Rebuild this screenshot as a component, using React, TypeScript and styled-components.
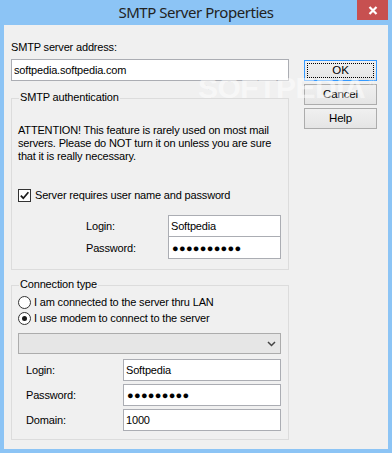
import React from 'react';
import styled, { createGlobalStyle } from 'styled-components';

const Global = createGlobalStyle`
  html, body { margin: 0; padding: 0; }
  body {
    width: 392px; height: 453px; overflow: hidden;
    background: #8cc4f5;
    font-family: "Liberation Sans", Arial, sans-serif;
    font-size: 11px; letter-spacing: -0.17px; color: #000;
  }
`;

const Window = styled.div`
  width: 392px; height: 453px; box-sizing: border-box;
  background: #8cc4f5;
  display: flex; flex-direction: column;
  padding: 0 4px 4px 4px;
`;

const TitleBar = styled.div`
  height: 25px; flex: none;
  display: grid; grid-template-columns: 1fr auto 1fr; align-items: start;
`;

const Title = styled.div`
  grid-column: 2;
  padding-top: 2px;
  font-family: "Noto Sans", "Open Sans", sans-serif;
  font-size: 15px; line-height: 20px; letter-spacing: -0.45px; color: #222;
  white-space: nowrap;
`;

const CloseButton = styled.div`
  grid-column: 3; justify-self: end;
  width: 31px; height: 20px;
  background: #c75050;
  display: flex; align-items: center; justify-content: center;
`;

const Client = styled.div`
  flex: 1; position: relative;
  background: #f0f0f0;
  box-sizing: border-box;
  padding: 16px 11px 0 7px;
  display: grid; grid-template-columns: 278px 73px; column-gap: 15px;
  align-items: start;
`;

const LeftCol = styled.div`
  display: flex; flex-direction: column;
`;

const Label = styled.div`
  line-height: 13px; white-space: nowrap;
`;

const TextBox = styled.input<{ $w?: number; $joined?: boolean }>`
  box-sizing: border-box;
  width: ${p => (p.$w ? `${p.$w}px` : '100%')};
  height: 22px; margin: 0;
  border: 1px solid #abadb3;
  ${p => (p.$joined ? 'border-top: none;' : '')}
  background: #fff; padding: 0 2px;
  font-family: "Liberation Sans", Arial, sans-serif; font-size: 11px;
  letter-spacing: -0.17px; color: #000;
  outline: none;
`;

const PasswordText = styled.span`
  font-size: 11px; letter-spacing: 0.3px;
`;

const PasswordBox = styled.div<{ $joined?: boolean }>`
  box-sizing: border-box; width: 100%; height: 22px;
  border: 1px solid #abadb3;
  ${p => (p.$joined ? 'border-top: none;' : '')}
  background: #fff; padding: 0 3px;
  display: flex; align-items: center;
`;

const AddressBox = styled(TextBox)`
  margin-top: 5px;
`;

const GroupBox = styled.div<{ $mt: number; $pt: number; $pb: number }>`
  position: relative;
  margin-top: ${p => p.$mt}px;
  border: 1px solid #dcdcdc;
  padding: ${p => p.$pt}px 7px ${p => p.$pb}px 6px;
  display: flex; flex-direction: column;
`;

const GroupTitle = styled.div`
  position: absolute; top: -8px; left: 7px;
  padding: 0 1px; background: #f0f0f0;
  line-height: 13px; white-space: nowrap;
`;

const Notice = styled.p`
  margin: 0; line-height: 13px;
`;

const CheckRow = styled.div`
  margin-top: 26px; height: 13px;
  display: flex; align-items: center; gap: 4px;
  line-height: 13px; white-space: nowrap;
`;

const CheckBox = styled.span`
  box-sizing: border-box; width: 13px; height: 13px; flex: none;
  border: 1px solid #333; background: #fff;
  display: flex; align-items: center; justify-content: center;
`;

const FieldGrid = styled.div<{ $ml: number; $mt: number; $cols: string; $gap: number }>`
  margin-left: ${p => p.$ml}px; margin-top: ${p => p.$mt}px;
  display: grid; grid-template-columns: ${p => p.$cols};
  grid-auto-rows: 22px; row-gap: ${p => p.$gap}px;
  align-items: center;
`;

const RadioRow = styled.div`
  height: 16px; display: flex; align-items: center; gap: 3px;
  line-height: 13px; white-space: nowrap;
`;

const Radio = styled.span<{ $on?: boolean }>`
  box-sizing: border-box; width: 13px; height: 13px; flex: none;
  border: 1px solid #333; border-radius: 50%; background: #fff;
  display: flex; align-items: center; justify-content: center;
  &::after {
    content: '';
    width: 5px; height: 5px; border-radius: 50%;
    background: ${p => (p.$on ? '#1a1a1a' : 'transparent')};
  }
`;

const Combo = styled.div`
  box-sizing: border-box; margin-top: 7px; height: 21px;
  border: 1px solid #acacac; background: #e6e6e6;
  display: flex; align-items: center; justify-content: flex-end;
  padding-right: 4px;
`;

const ButtonCol = styled.div`
  margin-top: 19px;
  display: flex; flex-direction: column; gap: 3px;
  position: relative; z-index: 0;
`;

const Button = styled.div<{ $default?: boolean }>`
  box-sizing: border-box; height: 21px;
  border: 1px solid ${p => (p.$default ? '#3399ff' : '#acacac')};
  background: linear-gradient(#f0f0f0, #e5e5e5);
  display: flex; align-items: center; justify-content: center;
  font-size: 11.5px; line-height: 13px; padding: ${p => (p.$default ? '2px' : '0')};
`;

const FocusRing = styled.div`
  box-sizing: border-box; width: 100%; height: 100%;
  border: 1px dotted #000;
  display: flex; align-items: center; justify-content: center;
`;

const Watermark = styled.div`
  position: absolute; left: 194px; top: 43px; z-index: 2;
  pointer-events: none;
  font-family: "Liberation Sans", Arial, sans-serif;
  font-weight: bold; font-size: 30px; line-height: 30px; letter-spacing: -0.5px;
  color: rgba(255, 255, 255, 0.5);
  -webkit-text-stroke: 0.6px rgba(0, 0, 0, 0.04);
  white-space: nowrap;
  sup { font-size: 10px; vertical-align: 12px; margin-left: 3px; }
`;

export default function App() {
  return (
    <>
      <Global />
      <Window>
        <TitleBar>
          <Title>SMTP Server Properties</Title>
          <CloseButton>
            <svg width="10" height="9" viewBox="0 0 10 9">
              <path d="M1.5 1 L8.5 8 M8.5 1 L1.5 8" stroke="#fff" strokeWidth="2.2" />
            </svg>
          </CloseButton>
        </TitleBar>
        <Client>
          <LeftCol>
            <Label>SMTP server address:</Label>
            <AddressBox readOnly value="softpedia.softpedia.com" />
            <GroupBox $mt={17} $pt={25} $pb={10}>
              <GroupTitle>SMTP authentication</GroupTitle>
              <Notice>
                ATTENTION! This feature is rarely used on most mail<br />
                servers. Please do NOT turn it on unless you are sure<br />
                that it is really necessary.
              </Notice>
              <CheckRow>
                <CheckBox>
                  <svg width="11" height="11" viewBox="0 0 11 11">
                    <path d="M1.8 5.6 L4.3 8.2 L9.4 2.3" stroke="#1a1a1a" strokeWidth="1.7" fill="none" />
                  </svg>
                </CheckBox>
                Server requires user name and password
              </CheckRow>
              <FieldGrid $ml={68} $mt={13} $cols="82px 113px" $gap={0}>
                <Label>Login:</Label>
                <TextBox readOnly value="Softpedia" />
                <Label>Password:</Label>
                <PasswordBox $joined><PasswordText>●●●●●●●●●●</PasswordText></PasswordBox>
              </FieldGrid>
            </GroupBox>
            <GroupBox $mt={15} $pt={8} $pb={8}>
              <GroupTitle>Connection type</GroupTitle>
              <RadioRow><Radio />I am connected to the server thru LAN</RadioRow>
              <RadioRow><Radio $on />I use modem to connect to the server</RadioRow>
              <Combo>
                <svg width="9" height="6" viewBox="0 0 9 6">
                  <path d="M1 1 L4.5 4.5 L8 1" stroke="#444" strokeWidth="1.5" fill="none" />
                </svg>
              </Combo>
              <FieldGrid $ml={8} $mt={5} $cols="97px 158px" $gap={3}>
                <Label>Login:</Label>
                <TextBox readOnly value="Softpedia" />
                <Label>Password:</Label>
                <PasswordBox><PasswordText>●●●●●●●●●</PasswordText></PasswordBox>
                <Label>Domain:</Label>
                <TextBox readOnly value="1000" />
              </FieldGrid>
            </GroupBox>
          </LeftCol>
          <ButtonCol>
            <Button $default><FocusRing>OK</FocusRing></Button>
            <Button>Cancel</Button>
            <Button>Help</Button>
          </ButtonCol>
          <Watermark aria-hidden="true">SOFTPEDIA<sup>®</sup></Watermark>
        </Client>
      </Window>
    </>
  );
}
